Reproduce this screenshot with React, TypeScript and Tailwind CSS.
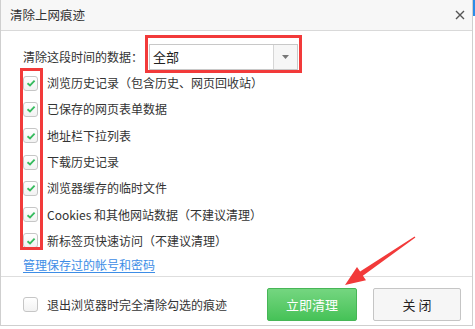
const items = [
  "浏览历史记录（包含历史、网页回收站）",
  "已保存的网页表单数据",
  "地址栏下拉列表",
  "下载历史记录",
  "浏览器缓存的临时文件",
  "Cookies 和其他网站数据（不建议清理）",
  "新标签页快速访问（不建议清理）",
];

function CheckBox({ checked }: { checked: boolean }) {
  return (
    <span className="w-[15px] h-[15px] shrink-0 rounded-[3px] border border-[#c6c6c6] bg-linear-to-b from-white to-[#f2f2f2] flex items-center justify-center">
      {checked && (
        <svg width="10" height="10" viewBox="0 0 10 10">
          <polyline
            points="1.5,5.2 4,7.4 8.6,2.6"
            fill="none"
            stroke="#36bb5e"
            strokeWidth="1.8"
          />
        </svg>
      )}
    </span>
  );
}

export default function App() {
  return (
    <div className="w-[475px] h-[329px] relative overflow-hidden bg-white text-[#333] font-['Noto_Sans_CJK_SC','Microsoft_YaHei',sans-serif]">
      {/* dialog */}
      <div className="w-[473px] h-[326px] border-x border-b border-[#cfcfcf] flex flex-col">
        {/* Header */}
        <div className="h-[31px] shrink-0 bg-[#f7f7f7] border-b border-[#d9d9d9] flex items-center justify-between pl-[9px] pr-[7px]">
          <span className="text-[12.5px] text-[#333]">清除上网痕迹</span>
          <svg width="10" height="10" viewBox="0 0 10 10">
            <path d="M1 1L9 9M9 1L1 9" stroke="#555" strokeWidth="1.4" />
          </svg>
        </div>

        {/* Body */}
        <div className="pl-[22px] pt-[13px] text-[12px]">
          <div className="flex items-center h-[26px]">
            <span className="w-[126px] shrink-0">清除这段时间的数据：</span>
            <div className="w-[149px] h-[26px] border border-[#c8c8c8] bg-white flex">
              <span className="flex-1 flex items-center pl-[3px] text-[13px] text-[#222]">
                全部
              </span>
              <span className="w-[24px] border-l border-[#d6d6d6] bg-[#f6f6f6] flex items-center justify-center">
                <svg width="7" height="4" viewBox="0 0 7 4">
                  <path d="M0 0H7L3.5 4Z" fill="#777" />
                </svg>
              </span>
            </div>
          </div>

          {items.map((label) => (
            <div key={label} className="h-[26.3px] flex items-center gap-[9px]">
              <CheckBox checked />
              <span>{label}</span>
            </div>
          ))}

          <div className="h-[22px] flex items-center">
            <span className="text-[#3d8de6] underline underline-offset-2">
              管理保存过的帐号和密码
            </span>
          </div>
        </div>

        {/* Footer */}
        <div className="border-t border-[#dedede] pl-[22px] pr-[11px] pt-[11px]">
          <div className="h-[33px] flex items-center">
            <div className="flex items-center gap-[9px] text-[12px]">
              <CheckBox checked={false} />
              <span>退出浏览器时完全清除勾选的痕迹</span>
            </div>
            <button className="ml-auto w-[90px] h-[33px] rounded-[2px] border border-[#47b657] bg-linear-to-b from-[#74d680] to-[#45c257] text-white text-[13px]">
              立即清理
            </button>
            <button className="ml-[16px] w-[88px] h-[33px] rounded-[2px] border border-[#c5c5c5] bg-[#f6f6f6] text-[#222] text-[13px]">
              关 闭
            </button>
          </div>
        </div>
      </div>

      {/* window edge */}
      <div className="absolute right-0 top-0 w-[2px] h-[16px] bg-[#2b8ce8]" />

      {/* annotations */}
      <div className="absolute left-[145px] top-[35px] w-[157px] h-[38px] border-[3px] border-[#f23a3a]" />
      <div className="absolute left-[20px] top-[68px] w-[23px] h-[182px] border-[3px] border-[#f23a3a]" />
      <svg className="absolute inset-0 pointer-events-none" width="475" height="329">
        <polygon
          points="345,285 366,280.3 362.9,275.8 415.4,237.6 414.6,236.4 360.1,271.6 357,267.1"
          fill="#f23a3a"
        />
      </svg>
    </div>
  );
}
